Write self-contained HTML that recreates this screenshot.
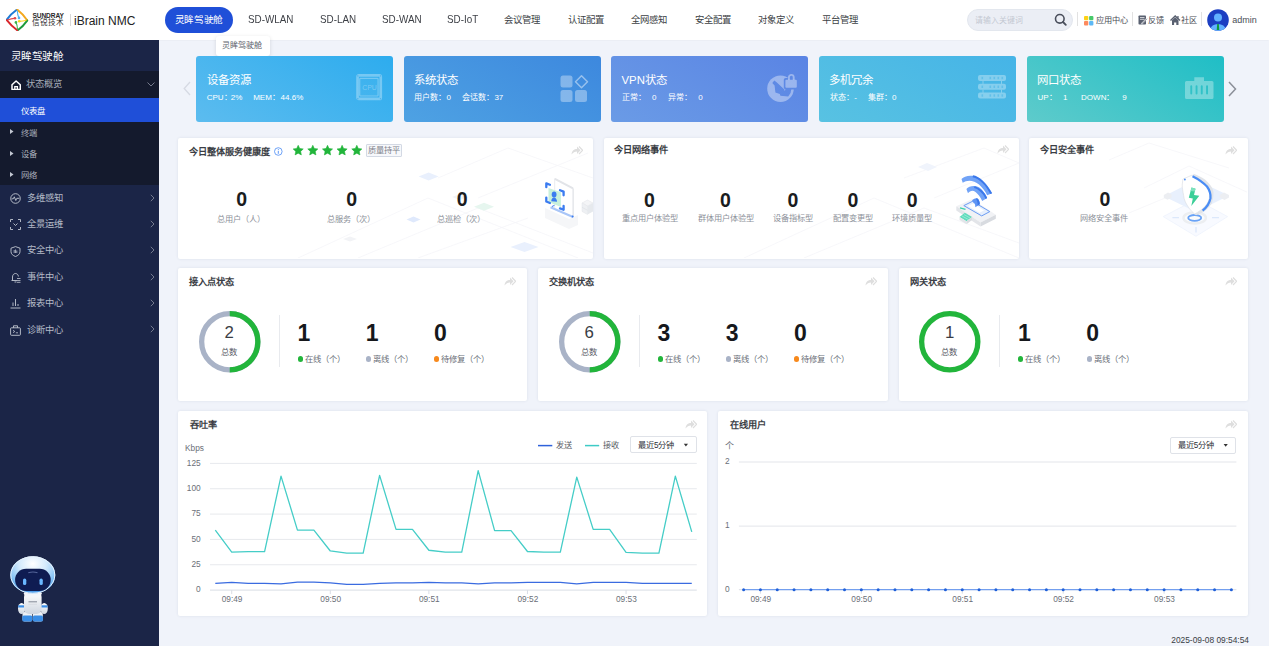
<!DOCTYPE html>
<html lang="zh-CN"><head><meta charset="utf-8">
<style>
*{margin:0;padding:0;box-sizing:border-box}
html,body{width:1269px;height:646px;overflow:hidden;background:#f0f3fa;font-family:"Liberation Sans",sans-serif;position:relative}
.a{position:absolute;white-space:nowrap;line-height:1}
#hdr{position:absolute;left:0;top:0;width:1269px;height:39.6px;background:#fff;box-shadow:0 0.6px 1px rgba(0,0,0,0.02)}
#side{position:absolute;left:0;top:40px;width:159px;height:606px;background:#1b2547}
.nav{font-size:10.6px;color:#3c3f45;top:14.4px;transform:scaleX(0.93);transform-origin:0 0}
.navc{font-size:9.4px;color:#3c3f45;top:14.6px}
.card{position:absolute;top:55.5px;height:66px;width:197.4px;border-radius:3px;color:#fff}
.card .t{position:absolute;left:10.5px;top:19px;font-size:11.4px;line-height:1;white-space:nowrap}
.card .s{position:absolute;left:10.5px;top:38px;font-size:8px;line-height:1;white-space:nowrap}
.pnl{position:absolute;background:#fff;border-radius:2px;box-shadow:0 0 3px rgba(40,60,110,0.10)}
.pt{position:absolute;left:11px;top:9.5px;font-size:9.2px;font-weight:bold;color:#3b3e45;white-space:nowrap;line-height:1}
.lbl{font-size:8.2px;color:#8c9099}
.big{font-size:19.5px;font-weight:bold;color:#1a1c20}
.fw{position:absolute;width:12px;height:9px}
.mi{font-size:9.3px;color:#b4bac6}
.sub{font-size:8.3px;color:#a9aebb}
.big2{font-size:23px;font-weight:bold;color:#16181c}
.tot{font-size:16.8px;color:#3a3d44}
.tl{font-size:8.3px;color:#55585f}
.lbl2{font-size:8.3px;color:#6b6f78}
.axl{font-size:8.3px;color:#6b6f78}
</style></head><body>
<!-- HEADER -->
<div id="hdr">
  <svg class="a" style="left:6px;top:9px" width="23" height="22" viewBox="0 0 23 22">
    <path d="M10.8 0.7 Q5 4.7 0.8 10.6" stroke="#1e7ad6" stroke-width="1.9" fill="none" stroke-linecap="round"/>
    <path d="M11.4 0.7 Q17.2 5.2 21.2 11.2" stroke="#f4a81d" stroke-width="1.9" fill="none" stroke-linecap="round"/>
    <path d="M21.2 11.6 Q17.2 17.3 11.8 21.2" stroke="#1d9a3c" stroke-width="1.9" fill="none" stroke-linecap="round"/>
    <path d="M11.2 21.2 Q5.2 16.9 0.8 11.2" stroke="#d9262c" stroke-width="1.9" fill="none" stroke-linecap="round"/>
    <path d="M11.3 1.5 Q11.5 6 12.7 8.4" stroke="#4fb2ef" stroke-width="1.1" fill="none"/><circle cx="13" cy="8.9" r="1.3" fill="#4fb2ef"/>
    <path d="M20.5 11.2 Q16.5 12 13.8 12.3" stroke="#f7d21c" stroke-width="1.1" fill="none"/><circle cx="13.2" cy="12.3" r="1.3" fill="#f7d21c"/>
    <path d="M11.5 20.5 Q11.3 16 10.2 13.8" stroke="#3cb24b" stroke-width="1.1" fill="none"/><circle cx="9.9" cy="13.4" r="1.3" fill="#3cb24b"/>
    <path d="M1.5 11 Q5.5 9.8 8.3 9.4" stroke="#e0474c" stroke-width="1.1" fill="none"/><circle cx="9" cy="9.3" r="1.3" fill="#e0474c"/>
  </svg>
  <div class="a" style="left:32.5px;top:12.5px;font-size:6.6px;font-weight:bold;color:#2a2a2a;letter-spacing:-0.1px">SUNDRAY</div>
  <div class="a" style="left:32.3px;top:18.6px;font-size:7.6px;color:#2c2c2c">信锐技术</div>
  <div class="a" style="left:69.5px;top:13.5px;width:1px;height:12.5px;background:#d8d8d8"></div>
  <div class="a" style="left:74px;top:14.5px;font-size:12px;color:#222">iBrain NMC</div>

  <div class="a" style="left:165px;top:6.5px;width:67.5px;height:26.5px;border-radius:13.25px;background:#1f4fd8"></div>
  <div class="a navc" style="left:174.8px;top:14.8px;font-size:9.6px;letter-spacing:-0.35px;color:#fff">灵眸驾驶舱</div>
  <div class="a nav" style="left:248px">SD-WLAN</div>
  <div class="a nav" style="left:319.5px">SD-LAN</div>
  <div class="a nav" style="left:381.5px">SD-WAN</div>
  <div class="a nav" style="left:447px">SD-IoT</div>
  <div class="a navc" style="left:504px">会议管理</div>
  <div class="a navc" style="left:568px">认证配置</div>
  <div class="a navc" style="left:631px">全网感知</div>
  <div class="a navc" style="left:694.5px">安全配置</div>
  <div class="a navc" style="left:758px">对象定义</div>
  <div class="a navc" style="left:821.5px">平台管理</div>

  <div class="a" style="left:967px;top:9px;width:106px;height:21.5px;border-radius:11px;background:#ebeef5;border:1px solid #e3e7ee"></div>
  <div class="a" style="left:975px;top:16.5px;font-size:7.9px;color:#c3c8d2">请输入关键词</div>
  <svg class="a" style="left:1054px;top:13px" width="13" height="13" viewBox="0 0 13 13"><circle cx="5.8" cy="5.8" r="4.3" stroke="#4a4f5c" stroke-width="1.6" fill="none"/><path d="M9 9 L11.8 11.8" stroke="#4a4f5c" stroke-width="1.8" stroke-linecap="round"/></svg>
  <div class="a" style="left:1076.5px;top:12px;width:1px;height:14px;background:#e2e2e2"></div>
  <svg class="a" style="left:1083.5px;top:15.5px" width="10" height="10" viewBox="0 0 10 10"><rect x="0" y="0" width="4.3" height="4.3" rx="1" fill="#fcd116"/><rect x="5.1" y="0" width="4.3" height="4.3" rx="1" fill="#47c96a"/><rect x="0" y="5.1" width="4.3" height="4.3" rx="1" fill="#fd8a5e"/><rect x="5.1" y="5.1" width="4.3" height="4.3" rx="1" fill="#5cb8f6"/></svg>
  <div class="a" style="left:1096px;top:16.8px;font-size:8.2px;color:#4a4d55">应用中心</div>
  <div class="a" style="left:1131.5px;top:12px;width:1px;height:14px;background:#e2e2e2"></div>
  <svg class="a" style="left:1137.5px;top:15px" width="10" height="10" viewBox="0 0 10 10"><rect x="0.5" y="0.5" width="7.5" height="9" rx="0.8" fill="#596070"/><path d="M2 2.5 H6.5 M2 4.3 H6.5" stroke="#fff" stroke-width="0.7"/><path d="M3.5 9 L9 3.5" stroke="#fff" stroke-width="1.6"/><path d="M3.8 8.8 L8.8 3.8" stroke="#596070" stroke-width="0.9"/></svg>
  <div class="a" style="left:1148px;top:16.8px;font-size:8.2px;color:#4a4d55">反馈</div>
  <svg class="a" style="left:1169.5px;top:14.5px" width="11" height="11" viewBox="0 0 11 11"><path d="M0.5 5.5 L5.2 1 L10 5.5" stroke="#596070" stroke-width="1.4" fill="none"/><path d="M2 5.2 L5.2 2.3 L8.5 5.2 V10 H6.3 V7.5 H4.1 V10 H2 Z" fill="#596070"/><rect x="7.3" y="1" width="1.3" height="2.5" fill="#596070"/></svg>
  <div class="a" style="left:1180.5px;top:16.8px;font-size:8.2px;color:#4a4d55">社区</div>
  <div class="a" style="left:1200.5px;top:12px;width:1px;height:14px;background:#e2e2e2"></div>
  <svg class="a" style="left:1207px;top:9px" width="22" height="22" viewBox="0 0 22 22"><defs><clipPath id="av"><circle cx="11" cy="11" r="10.8"/></clipPath></defs><circle cx="11" cy="11" r="10.8" fill="#1c3fc2"/><g clip-path="url(#av)"><circle cx="11" cy="8.5" r="4" fill="#62b1ff"/><ellipse cx="11" cy="20.5" rx="7.5" ry="5.5" fill="#62b1ff"/><path d="M10.2 15 H11.8 L12.3 21 H9.7 Z" fill="#0e9b3a"/></g></svg>
  <div class="a" style="left:1232.3px;top:16px;font-size:9px;color:#4a4d55">admin</div>
</div>

<!-- SIDEBAR -->
<div id="side">
  <div class="a" style="left:0;top:31px;width:159px;height:113.5px;background:#141a2d"></div>
  <div class="a" style="left:0;top:58px;width:159px;height:24px;background:#1f4fd8"></div>
  <div class="a" style="left:10.5px;top:10.8px;font-size:10.6px;letter-spacing:-0.5px;color:#fff">灵眸驾驶舱</div>
  <svg class="a" style="left:10.8px;top:39.6px" width="10.5" height="10.5" viewBox="0 0 10.5 10.5"><path d="M1 4.8 L5.1 1 L9.3 4.8 V9.4 H1 Z" stroke="#fff" stroke-width="1.5" fill="none" stroke-linejoin="round"/><path d="M3.8 9.4 V6.6 H6.4 V9.4" stroke="#fff" stroke-width="1.3" fill="none"/></svg>
  <div class="a mi" style="left:26px;top:40.3px;color:#a5abb8">状态概览</div>
  <svg class="a" style="left:147px;top:42px" width="8" height="5" viewBox="0 0 8 5"><path d="M0.5 0.5 L4 4 L7.5 0.5" stroke="#7f8596" stroke-width="0.9" fill="none"/></svg>
  <div class="a" style="left:21px;top:67px;font-size:8.4px;color:#fff">仪表盘</div>

  <svg class="a" style="left:10px;top:89px" width="4" height="5"><path d="M0 0 L3.5 2.5 L0 5 Z" fill="#c3c8d3"/></svg>
  <div class="a sub" style="left:20.8px;top:88.5px">终端</div>
  <svg class="a" style="left:10px;top:111px" width="4" height="5"><path d="M0 0 L3.5 2.5 L0 5 Z" fill="#c3c8d3"/></svg>
  <div class="a sub" style="left:20.8px;top:110px">设备</div>
  <svg class="a" style="left:10px;top:132px" width="4" height="5"><path d="M0 0 L3.5 2.5 L0 5 Z" fill="#c3c8d3"/></svg>
  <div class="a sub" style="left:20.8px;top:131px">网络</div>

  <!-- menus: centers y (abs) 198.3,224.5,251,277.6,303.8,330.4 -> side-relative minus 40 -->
  <svg class="a" style="left:10px;top:153px" width="11" height="11" viewBox="0 0 11 11"><circle cx="5.5" cy="5.5" r="4.8" stroke="#c3c8d3" stroke-width="0.9" fill="none"/><path d="M1.5 5.8 H3.3 L4.3 3.8 L5.8 7.5 L6.8 5.3 H9.5" stroke="#c3c8d3" stroke-width="0.9" fill="none"/></svg>
  <div class="a mi" style="left:26.5px;top:153.5px">多维感知</div>
  <svg class="a" style="left:149.5px;top:153.7px" width="5" height="8" viewBox="0 0 5 8"><path d="M0.8 0.8 L4 4 L0.8 7.2" stroke="#7f8596" stroke-width="0.9" fill="none"/></svg>

  <svg class="a" style="left:10px;top:179px" width="11" height="11" viewBox="0 0 11 11"><path d="M0.5 3 V0.5 H3 M8 0.5 H10.5 V3 M10.5 8 V10.5 H8 M3 10.5 H0.5 V8" stroke="#c3c8d3" stroke-width="0.9" fill="none"/><path d="M3.5 4.5 L5.5 6.5 L7.5 4.5" stroke="#c3c8d3" stroke-width="0.9" fill="none"/></svg>
  <div class="a mi" style="left:26.5px;top:179.7px">全景运维</div>
  <svg class="a" style="left:149.5px;top:179.7px" width="5" height="8" viewBox="0 0 5 8"><path d="M0.8 0.8 L4 4 L0.8 7.2" stroke="#7f8596" stroke-width="0.9" fill="none"/></svg>

  <svg class="a" style="left:10px;top:205.5px" width="11" height="11" viewBox="0 0 11 11"><path d="M5.5 0.6 L10 2.2 V5.6 C10 8 8 9.7 5.5 10.5 C3 9.7 1 8 1 5.6 V2.2 Z" stroke="#c3c8d3" stroke-width="0.9" fill="none"/><path d="M4.2 4 V7 M5.5 3.5 V7 M6.8 4.5 V7" stroke="#c3c8d3" stroke-width="0.8"/></svg>
  <div class="a mi" style="left:26.5px;top:206.2px">安全中心</div>
  <svg class="a" style="left:149.5px;top:206.2px" width="5" height="8" viewBox="0 0 5 8"><path d="M0.8 0.8 L4 4 L0.8 7.2" stroke="#7f8596" stroke-width="0.9" fill="none"/></svg>

  <svg class="a" style="left:10px;top:232px" width="11" height="11" viewBox="0 0 11 11"><path d="M1.5 8.5 H7 M2.5 8.5 V5 C2.5 3 3.8 1.5 5.5 1.5 C7 1.5 8.3 2.7 8.4 4.5" stroke="#c3c8d3" stroke-width="0.9" fill="none"/><path d="M7 6.5 H10.5 M7 8.5 H10.5 M7 10.3 H10.5" stroke="#c3c8d3" stroke-width="0.8"/><path d="M4.5 10 H6.5" stroke="#c3c8d3" stroke-width="0.9"/></svg>
  <div class="a mi" style="left:26.5px;top:232.8px">事件中心</div>
  <svg class="a" style="left:149.5px;top:232.7px" width="5" height="8" viewBox="0 0 5 8"><path d="M0.8 0.8 L4 4 L0.8 7.2" stroke="#7f8596" stroke-width="0.9" fill="none"/></svg>

  <svg class="a" style="left:10px;top:258px" width="11" height="11" viewBox="0 0 11 11"><path d="M0.5 10 H10.5" stroke="#c3c8d3" stroke-width="0.9"/><path d="M3 8 V4.5 M5.5 8 V1 M8 8 V6" stroke="#c3c8d3" stroke-width="0.9"/></svg>
  <div class="a mi" style="left:26.5px;top:259px">报表中心</div>
  <svg class="a" style="left:149.5px;top:258.7px" width="5" height="8" viewBox="0 0 5 8"><path d="M0.8 0.8 L4 4 L0.8 7.2" stroke="#7f8596" stroke-width="0.9" fill="none"/></svg>

  <svg class="a" style="left:10px;top:284.5px" width="11" height="11" viewBox="0 0 11 11"><rect x="0.6" y="2.8" width="9.8" height="7.5" rx="0.8" stroke="#c3c8d3" stroke-width="0.9" fill="none"/><path d="M3.5 2.8 V0.8 H7.5 V2.8" stroke="#c3c8d3" stroke-width="0.9" fill="none"/><path d="M3 5.3 L4.8 6.5 L3 7.7 M5.8 7.8 H8" stroke="#c3c8d3" stroke-width="0.8" fill="none"/></svg>
  <div class="a mi" style="left:26.5px;top:285.6px">诊断中心</div>
  <svg class="a" style="left:149.5px;top:285.2px" width="5" height="8" viewBox="0 0 5 8"><path d="M0.8 0.8 L4 4 L0.8 7.2" stroke="#7f8596" stroke-width="0.9" fill="none"/></svg>

  <!-- robot -->
  <svg class="a" style="left:0;top:505px" width="70" height="85" viewBox="0 0 70 85">
    <defs>
      <radialGradient id="hel" cx="0.5" cy="0.2" r="0.85"><stop offset="0" stop-color="#ffffff"/><stop offset="0.35" stop-color="#d4eafc"/><stop offset="0.68" stop-color="#86c3f5"/><stop offset="0.88" stop-color="#4c9cea"/><stop offset="1" stop-color="#d6eafc"/></radialGradient>
      <linearGradient id="bod" x1="0" y1="0" x2="0" y2="1"><stop offset="0" stop-color="#ffffff"/><stop offset="1" stop-color="#cfd6e0"/></linearGradient>
    </defs>
    <rect x="22.5" y="67" width="9.8" height="9.5" rx="2" fill="#eef1f5"/><rect x="33" y="67" width="9.8" height="9.5" rx="2" fill="#eef1f5"/>
    <rect x="22.3" y="70.5" width="10" height="6" rx="1.5" fill="#3a8ee6"/><rect x="32.9" y="70.5" width="10" height="6" rx="1.5" fill="#3a8ee6"/>
    <ellipse cx="21.6" cy="63.5" rx="3.6" ry="5.6" fill="url(#bod)"/><ellipse cx="44.2" cy="63.5" rx="3.6" ry="5.6" fill="url(#bod)"/>
    <rect x="18.2" y="60.3" width="6.5" height="2.2" fill="#3a8ee6"/><rect x="41" y="60.3" width="6.5" height="2.2" fill="#3a8ee6"/>
    <rect x="24" y="47" width="17.6" height="22" rx="5" fill="url(#bod)"/>
    <path d="M28.5 56.8 H37" stroke="#6b7280" stroke-width="0.8"/><path d="M28.5 59.3 H37" stroke="#d0d5dc" stroke-width="0.6"/>
    <ellipse cx="32.8" cy="48.5" rx="9" ry="3.6" fill="#f4f6fa"/>
    <ellipse cx="32.8" cy="30" rx="22.5" ry="18.8" fill="url(#hel)"/>
    <ellipse cx="32.8" cy="30" rx="22" ry="18.3" fill="none" stroke="#e8f3fd" stroke-width="1"/>
    <rect x="15.1" y="23.7" width="35.6" height="22.3" rx="11" fill="#0f1c52"/>
    <rect x="23" y="33.6" width="3.3" height="6.5" rx="1.6" fill="#69b7ff"/><rect x="39.5" y="33.6" width="3.3" height="6.5" rx="1.6" fill="#69b7ff"/>
    <path d="M28.3 27.8 Q33 26.2 37.5 27.8" stroke="#55659a" stroke-width="1.2" fill="none"/>
  </svg>
</div>

<!-- TOOLTIP -->
<div class="a" style="left:216.3px;top:35.5px;width:54px;height:20px;background:#fff;border-radius:3px;box-shadow:0 1px 4px rgba(0,0,0,0.12)"></div>
<div class="a" style="left:222.2px;top:42.3px;font-size:8.1px;color:#60646c">灵眸驾驶舱</div>

<!-- CARDS -->
<svg class="a" style="left:183px;top:81px" width="8" height="15" viewBox="0 0 8 15"><path d="M7 1 L1.2 7.5 L7 14" stroke="#d6dae3" stroke-width="1.3" fill="none"/></svg>
<svg class="a" style="left:1228px;top:80.5px" width="9" height="16" viewBox="0 0 9 16"><path d="M1 1 L7.5 8 L1 15" stroke="#8b8f98" stroke-width="1.5" fill="none"/></svg>

<div class="card" style="left:196px;background:linear-gradient(30deg,#5cbcef 0%,#2dacee 100%)">
  <div class="t">设备资源</div><div class="s" style="left:10.75px">CPU：</div><div class="s" style="left:34.7px">2%</div><div class="s" style="left:57.2px">MEM：</div><div class="s" style="left:84.6px">44.6%</div>
  <svg class="a" style="left:160px;top:18px" width="27" height="27" viewBox="0 0 27 27"><rect x="1.55" y="1.45" width="23.2" height="23.5" rx="1.2" stroke="rgba(255,255,255,0.32)" stroke-width="2.7" fill="none"/><g fill="rgba(40,150,220,0.5)"><circle cx="1.8" cy="1.9" r="0.7"/><circle cx="24.5" cy="1.9" r="0.7"/><circle cx="1.8" cy="24.7" r="0.7"/><circle cx="24.5" cy="24.7" r="0.7"/></g><rect x="3.7" y="4.4" width="18.4" height="17.6" rx="0.8" stroke="rgba(255,255,255,0.3)" stroke-width="1.2" fill="rgba(255,255,255,0.04)"/><text x="13.5" y="16.3" text-anchor="middle" font-family="Liberation Sans" font-size="6.9" fill="rgba(255,255,255,0.3)">CPU</text></svg>
</div>
<div class="card" style="left:403.5px;background:linear-gradient(30deg,#4ea2e3 0%,#3d88de 100%)">
  <div class="t">系统状态</div><div class="s" style="left:10.5px">用户数：</div><div class="s" style="left:43.1px">0</div><div class="s" style="left:58.7px">会话数：</div><div class="s" style="left:90.9px">37</div>
  <svg class="a" style="left:156px;top:18px" width="30" height="29" viewBox="0 0 30 29"><g fill="rgba(255,255,255,0.35)"><rect x="0.5" y="1.5" width="12" height="12" rx="2.5"/><rect x="0.5" y="16" width="12" height="12" rx="2.5"/><rect x="15" y="16" width="12" height="12" rx="2.5"/></g><path d="M21.5 1.8 L27.5 7.8 L21.5 13.8 L15.5 7.8 Z" stroke="rgba(255,255,255,0.45)" stroke-width="1.5" fill="none" stroke-linejoin="round"/></svg>
</div>
<div class="card" style="left:611px;background:linear-gradient(30deg,#6a9be6 0%,#5a84e4 100%)">
  <div class="t">VPN状态</div><div class="s" style="left:11.1px">正常：</div><div class="s" style="left:41.1px">0</div><div class="s" style="left:56.8px">异常：</div><div class="s" style="left:87.2px">0</div>
  <svg class="a" style="left:151px;top:14.5px" width="38" height="36" viewBox="0 0 38 36"><defs><mask id="vpnm"><rect width="38" height="36" fill="#fff"/><path d="M10.3 13 L12.3 10.6 L14.6 12.3 L22.4 19.6 L22.7 21.2 L23.9 18.6 L29.4 18.8 A10.9 10.9 0 0 1 26.2 26.4 L18.4 25.7 L17.8 24.1 L13.4 22.4 L12.6 15.6 Z" fill="#000"/><rect x="21.8" y="8" width="14.6" height="11.4" rx="1.8" fill="#000"/></mask></defs><g fill="rgba(255,255,255,0.38)"><circle cx="18.5" cy="18.7" r="13.3" mask="url(#vpnm)"/><rect x="23.4" y="9.7" width="11.4" height="8.1" rx="1"/><path d="M26.9 10 V7.3 A2.4 2.4 0 0 1 31.7 7.3 V10" stroke="rgba(255,255,255,0.38)" stroke-width="1.9" fill="none"/></g></svg>
</div>
<div class="card" style="left:818.5px;background:linear-gradient(30deg,#58c2e2 0%,#45b4e7 100%)">
  <div class="t">多机冗余</div><div class="s" style="left:11.25px">状态：</div><div class="s" style="left:35.7px">-</div><div class="s" style="left:49.4px">集群：</div><div class="s" style="left:73.5px">0</div>
  <svg class="a" style="left:159px;top:19.5px" width="29" height="25" viewBox="0 0 29 25"><g fill="rgba(255,255,255,0.33)"><rect x="0" y="0" width="28" height="6" rx="2"/><rect x="0" y="8.8" width="28" height="6" rx="2"/><rect x="0" y="17.5" width="28" height="6" rx="2"/><rect x="4.5" y="6" width="1" height="2.8"/><rect x="23" y="6" width="1" height="2.8"/><rect x="4.5" y="14.8" width="1" height="2.8"/><rect x="23" y="14.8" width="1" height="2.8"/></g><g fill="rgba(70,180,230,0.55)"><rect x="3.5" y="1.8" width="1.6" height="2.4"/><rect x="11.5" y="1.8" width="1.6" height="2.4"/><rect x="15.5" y="1.8" width="1.6" height="2.4"/><rect x="19.5" y="1.8" width="1.6" height="2.4"/><rect x="23.5" y="1.8" width="1.6" height="2.4"/><rect x="3.5" y="10.6" width="1.6" height="2.4"/><rect x="11.5" y="10.6" width="1.6" height="2.4"/><rect x="15.5" y="10.6" width="1.6" height="2.4"/><rect x="19.5" y="10.6" width="1.6" height="2.4"/><rect x="23.5" y="10.6" width="1.6" height="2.4"/><rect x="3.5" y="19.3" width="1.6" height="2.4"/><rect x="11.5" y="19.3" width="1.6" height="2.4"/><rect x="15.5" y="19.3" width="1.6" height="2.4"/><rect x="19.5" y="19.3" width="1.6" height="2.4"/><rect x="23.5" y="19.3" width="1.6" height="2.4"/></g></svg>
</div>
<div class="card" style="left:1026.8px;background:linear-gradient(30deg,#5ecbcb 0%,#1fbec6 100%)">
  <div class="t">网口状态</div><div class="s" style="left:10.8px">UP：</div><div class="s" style="left:36.3px">1</div><div class="s" style="left:54.3px">DOWN：</div><div class="s" style="left:95.4px">9</div>
  <svg class="a" style="left:158px;top:21px" width="29" height="23" viewBox="0 0 29 23"><path fill-rule="evenodd" fill="rgba(255,255,255,0.33)" d="M9.3 0.3 H19 V4 H27 a1.5 1.5 0 0 1 1.5 1.5 V20.6 a1.5 1.5 0 0 1 -1.5 1.5 H1.5 a1.5 1.5 0 0 1 -1.5 -1.5 V5.5 a1.5 1.5 0 0 1 1.5 -1.5 H9.3 Z M5.3 9.2 a0.95 0.95 0 0 1 1.9 0 V16.6 a0.95 0.95 0 0 1 -1.9 0 Z M10.6 9.2 a0.95 0.95 0 0 1 1.9 0 V16.6 a0.95 0.95 0 0 1 -1.9 0 Z M15.8 9.2 a0.95 0.95 0 0 1 1.9 0 V16.6 a0.95 0.95 0 0 1 -1.9 0 Z M21.1 9.2 a0.95 0.95 0 0 1 1.9 0 V16.6 a0.95 0.95 0 0 1 -1.9 0 Z "/></svg>
</div>

<!-- ROW 1 -->
<div class="pnl" style="left:178px;top:138px;width:415.4px;height:120.5px;overflow:hidden">
  <svg class="a" style="left:0;top:0" width="415" height="120" viewBox="0 0 415 120"><g stroke="#f3f4f8" stroke-width="0.7" fill="none"><path d="M120 120 L250 60 L400 120"/><path d="M180 120 L300 70 L415 115"/><path d="M240 120 L350 80"/><path d="M260 40 L330 10 L415 40"/><path d="M300 60 L410 15"/></g><g fill="#e9f0fd"><path d="M240.6 38.5 L250.6 34.5 L260.6 38.5 L250.6 42.5 Z"/><path d="M228.5 81.4 L235.5 78.4 L242.5 81.4 L235.5 84.4 Z" fill="#dfe9fc"/><path d="M332.5 109.0 L346.5 104.0 L360.5 109.0 L346.5 114.0 Z"/></g><path d="M296.0 68.8 L306.0 64.8 L316.0 68.8 L306.0 72.8 Z" fill="#e6f6ef"/><g fill="#f2f3f6"><path d="M274.0 59.0 L282.0 56.0 L290.0 59.0 L282.0 62.0 Z"/><path d="M165.0 101.0 L172.0 98.5 L179.0 101.0 L172.0 103.5 Z"/></g></svg>
  <div class="pt">今日整体服务健康度</div>
  <svg class="a" style="left:96.3px;top:8.8px" width="9" height="9" viewBox="0 0 9 9"><circle cx="4.3" cy="4.5" r="3.8" stroke="#4a8cf5" stroke-width="0.8" fill="none"/><path d="M4.3 3.8 V6.8" stroke="#4a8cf5" stroke-width="0.9"/><circle cx="4.3" cy="2.5" r="0.5" fill="#4a8cf5"/></svg>
  <svg class="a" style="left:115px;top:6.6px" width="72" height="12" viewBox="0 0 72 12"><g fill="#22b53b"><path id="st" stroke="#22b53b" stroke-width="0.6" stroke-linejoin="round" d="M5.20 0.30 L6.70 3.54 L10.24 3.96 L7.63 6.39 L8.32 9.89 L5.20 8.15 L2.08 9.89 L2.77 6.39 L0.16 3.96 L3.70 3.54 Z"/><use href="#st" x="14.6"/><use href="#st" x="29.3"/><use href="#st" x="43.9"/><use href="#st" x="58.6"/></g></svg>
  <div class="a" style="left:188.1px;top:6px;width:35.5px;height:13px;border:1px solid #d3d9e4;background:#f7f8fb;border-radius:1px"></div>
  <div class="a lbl" style="left:190px;top:8.5px;color:#7d818a">质量持平</div>
  <svg class="fw a" style="left:393.2px;top:7.6px" viewBox="0 0 12 9"><path d="M0.5 8.5 C1 4.5 3 3 6 3 V0.5 L9.5 4.3 L6 8 V5.5 C3.8 5.5 2 6.5 0.5 8.5 Z" fill="#dedede"/><path d="M8 0.5 L11.6 4.3 L8 8" stroke="#dedede" stroke-width="1.2" fill="none"/></svg>
  <div class="a big" style="left:58.3px;top:52.4px">0</div>
  <div class="a lbl" style="left:38.5px;top:77.5px">总用户（人）</div>
  <div class="a big" style="left:168.3px;top:52.4px">0</div>
  <div class="a lbl" style="left:148.5px;top:77.5px">总服务（次）</div>
  <div class="a big" style="left:278.8px;top:52.4px">0</div>
  <div class="a lbl" style="left:259px;top:77.5px">总巡检（次）</div>
  <!-- illustration -->
  <svg class="a" style="left:362px;top:37px" width="55" height="56" viewBox="0 0 55 56">
    <path d="M5 33 L29 44 L38 40 V50 L29 54 L5 43 Z" fill="#f5f6f8"/>
    <path d="M14.7 3.6 L33.2 13.5 V42 L14.7 34.5 Z" fill="#fff" stroke="#e4e6ea" stroke-width="0.8"/>
    <path d="M14.9 3.8 L33 13.3" stroke="#e2e4e8" stroke-width="2"/>
    <path d="M33.2 13.5 V42" stroke="#e6e8eb" stroke-width="1.4"/>
    <path d="M10.5 32.3 L33 42" stroke="#a9c6f8" stroke-width="2.2"/>
    <path d="M12 31.5 L14.5 30.3" stroke="#3b7cf0" stroke-width="1"/>
    <circle cx="32.6" cy="41.6" r="1" fill="#3b7cf0"/>
    <path d="M8.5 12.9 L20.9 17.2 V32 L8.5 27.1 Z" fill="#c8f0dc"/>
    <g stroke="#3b7cf0" stroke-width="2.3" fill="none" stroke-linecap="round" stroke-linejoin="round">
      <path d="M6.3 12.2 V8.4 L9.9 9.8"/><path d="M20 15.2 L23.6 16.6 V20.3"/><path d="M6.3 22.6 V26.5 L9.9 28"/><path d="M23.6 31 V34.8 L20 33.4"/>
    </g>
    <ellipse cx="14.1" cy="19.6" rx="2.4" ry="3" fill="#3b7cf0"/>
    <path d="M11.2 26.2 Q11.8 22.3 14.1 22.6 Q16.6 22.8 17.1 26.8 Z" fill="#3b7cf0"/>
    <path d="M42 28 L47.5 25 L53 28 L47.5 31 Z" fill="#f4f5f7" stroke="#e3e5e9" stroke-width="0.5"/>
    <path d="M42 28 L47.5 31 V39.5 L42 36.5 Z" fill="#eef0f3" stroke="#e3e5e9" stroke-width="0.5"/>
    <path d="M47.5 31 L53 28 V36.5 L47.5 39.5 Z" fill="#e6e9ed"/>
    <path d="M42 32.3 L47.5 35.3" stroke="#dcdfe4" stroke-width="0.6"/>
  </svg>
</div>
<div class="pnl" style="left:604px;top:138px;width:415.2px;height:120.5px;overflow:hidden">
  <svg class="a" style="left:0;top:0" width="415" height="120" viewBox="0 0 415 120"><g stroke="#f3f4f8" stroke-width="0.7" fill="none"><path d="M140 120 L270 60 L415 120"/><path d="M200 120 L320 70 L415 105"/><path d="M300 40 L380 10 L415 25"/><path d="M330 60 L415 25"/></g><path d="M314 29 L323 25 L333 29 L324 33 Z" fill="#f0f4fc"/></svg>
  <div class="pt" style="left:10.2px;top:8px">今日网络事件</div>
  <svg class="fw a" style="left:393.2px;top:7.1px" viewBox="0 0 12 9"><path d="M0.5 8.5 C1 4.5 3 3 6 3 V0.5 L9.5 4.3 L6 8 V5.5 C3.8 5.5 2 6.5 0.5 8.5 Z" fill="#dedede"/><path d="M8 0.5 L11.6 4.3 L8 8" stroke="#dedede" stroke-width="1.2" fill="none"/></svg>
  <div class="a big" style="left:40px;top:52.8px">0</div>
  <div class="a lbl" style="left:18px;top:77px">重点用户体验型</div>
  <div class="a big" style="left:116px;top:52.8px">0</div>
  <div class="a lbl" style="left:93.5px;top:77px">群体用户体验型</div>
  <div class="a big" style="left:183.5px;top:52.8px">0</div>
  <div class="a lbl" style="left:169px;top:77px">设备指标型</div>
  <div class="a big" style="left:243.5px;top:52.8px">0</div>
  <div class="a lbl" style="left:228.5px;top:77px">配置变更型</div>
  <div class="a big" style="left:302.8px;top:52.8px">0</div>
  <div class="a lbl" style="left:288px;top:77px">环境质量型</div>
  <svg class="a" style="left:336px;top:27px" width="70" height="70" viewBox="0 0 70 70">
    <path d="M16.3 41.2 L32.5 34.1 L55.8 49.8 L40.6 57.4 Z" fill="#f1f2f5"/>
    <path d="M16.3 41.2 V45.5 L40.6 61.5 V57.4 Z" fill="#e3e5e9"/>
    <path d="M40.6 57.4 V61.5 L55.8 53.8 V49.8 Z" fill="#d8dbe0"/>
    <path d="M23.8 40.6 L32.5 36.3 L49.8 46.6 L41.7 50.9 Z" fill="#e6effd" stroke="#6b9cf3" stroke-width="1"/>
    <path d="M28 41 L33 38.6 L44 45.5 L39.5 47.8 Z" fill="#ffffff"/>
    <path d="M20 42.8 L25.5 44.4" stroke="#3fd0a9" stroke-width="1.4"/>
    <path d="M19.5 52 L24.9 47.7 L32 52 L26.5 56.3 Z" fill="#5fdcbc"/>
    <path d="M19.5 52 V55 L26.5 59.3 V56.3 Z" fill="#e3e5e9"/><path d="M26.5 56.3 V59.3 L32 55 V52 Z" fill="#d8dbe0"/>
    <path d="M22 51 L28.5 54.6 M24 49.6 L30.4 53.2" stroke="#c9f5ea" stroke-width="0.5"/>
    <path d="M21.5 14.1 C25 10.5 35 8 44 17 C48 21 50.5 25 52.1 28.3 L47.2 30.2 C45 26 42 22 39 19.5 C34 15 27 14.5 22.7 17.8 Z" fill="#71a3f7"/>
    <path d="M33 10.2 C39 11 46.5 18 52.1 28.3 L50.3 29 C46 20.5 39.5 13.5 32.6 12.2 Z" fill="#3b78ea"/>
    <path d="M26.4 24 C29 21 35 19.5 40 23 C43 25.5 45.5 29 47.2 33 L42.2 36.1 C40.5 32 38 29 35.5 27 C33 25 30 25.5 28 28.3 Z" fill="#71a3f7"/>
    <path d="M34.5 21.2 C39 22.3 44.5 26.5 47.2 33 L45.6 34 C42.8 28 38.5 24.3 34 23.1 Z" fill="#3b78ea"/>
    <path d="M32 36 C33 34 35.5 32.8 37.5 33.5 C39 34.5 39.8 37 39.8 39.2 L35.4 42.3 L35 39 Z" fill="#5f95f4"/>
    <path d="M37.5 33.5 C39 34.5 39.8 37 39.8 39.2 L37.6 40.7 C37.8 38 37.2 35.5 35.8 33.6 Z" fill="#3b78ea"/>
  </svg>
</div>
<div class="pnl" style="left:1029.4px;top:138px;width:218.6px;height:120.5px;overflow:hidden">
  <svg class="a" style="left:0;top:0" width="218" height="120" viewBox="0 0 218 120"><g stroke="#f3f4f8" stroke-width="0.7" fill="none"><path d="M80 22 L120 5 L200 30"/><path d="M115 50 L160 28 L220 55"/><path d="M100 75 L160 50"/></g></svg>
  <div class="pt" style="left:10.8px;top:8px">今日安全事件</div>
  <svg class="fw a" style="left:196.0px;top:7.6px" viewBox="0 0 12 9"><path d="M0.5 8.5 C1 4.5 3 3 6 3 V0.5 L9.5 4.3 L6 8 V5.5 C3.8 5.5 2 6.5 0.5 8.5 Z" fill="#dedede"/><path d="M8 0.5 L11.6 4.3 L8 8" stroke="#dedede" stroke-width="1.2" fill="none"/></svg>
  <div class="a big" style="left:70px;top:52.3px">0</div>
  <div class="a lbl" style="left:51px;top:76.8px">网络安全事件</div>
  <svg class="a" style="left:120.6px;top:22px" width="90" height="85" viewBox="0 0 90 85">
    <path d="M13.2 56.6 L46 39.5 L77.6 56.6 L46 76.3 Z" fill="#f8faff" stroke="#eef3fd" stroke-width="0.8"/>
    <path d="M13.8 36.2 L46 20 L79 35.5 L46 52 Z" fill="#e8f0fd"/>
    <g stroke="#dce8fb" stroke-width="1.3"><path d="M22.4 57.6 H29"/><path d="M62 57.6 H69"/><path d="M46 67 V72.5"/></g>
    <path d="M13.8 35 L18 32.5 L21.7 34.5 L21.7 37.5 L17.5 39.8 L13.8 37.8 Z" fill="#eceef2"/>
    <path d="M69.7 35 L74 32.5 L79 35 V37.5 L74.5 40 L69.7 37.5 Z" fill="#eceef2"/>
    <ellipse cx="44.7" cy="57.9" rx="11.2" ry="5.6" fill="#fafbfc" stroke="#eceef1" stroke-width="2.4"/>
    <ellipse cx="44.7" cy="57.9" rx="6.5" ry="2.9" fill="none" stroke="#6aa3f6" stroke-width="1.8"/>
    <path d="M43.4 13.8 C48 15.5 52 17.5 55.3 19.7 C60 24 63 28 63.5 32 C63.5 38 62.5 41 61.8 43.4 C58.5 48 55.5 50.5 52.6 52.6 L46 55.3 L44 54 Z" fill="#e1e4e9"/>
    <path d="M32.9 19.1 L42.1 15.1 C47 17.5 52.5 21 56.6 25.7 C59 29 60 32 59.9 35.5 C59.5 40 57.5 43.5 55.3 46 C52 49.5 48.5 52 44.7 54 C42.5 52.5 41 50.5 39.5 48.7 C36 44 34 40 33.6 35.5 C32.8 31 32.2 28 32.2 25 Z" fill="#ffffff" stroke="#dcdfe5" stroke-width="0.7"/>
    <path d="M42.5 16.2 C47.5 18.7 53 22.3 57 26.5 C59.5 30 60.8 34 60.5 38.2 C59.5 43 56.5 47.5 52.6 50.7" stroke="#4a8df5" stroke-width="2.2" fill="none"/>
    <circle cx="34.9" cy="19.5" r="0.9" fill="#4a8df5"/>
    <path d="M41.5 27.5 L45.5 28.8 L44 35 L49.3 35.8 L41.3 46 L42.8 38.5 L38.8 37.8 Z" fill="#3ccf98"/>
    <path d="M41.5 27.5 L45.5 28.8 L44.8 31.5 L40.5 31 Z" fill="#7ee2bd"/>
  </svg>
</div>

<!-- ROW 2 -->
<!--ROW2START-->
<div class="pnl" style="left:178px;top:268px;width:349.3px;height:133.3px">
  <div class="pt">接入点状态</div>
  <svg class="fw a" style="left:326.0px;top:9.1px" viewBox="0 0 12 9"><path d="M0.5 8.5 C1 4.5 3 3 6 3 V0.5 L9.5 4.3 L6 8 V5.5 C3.8 5.5 2 6.5 0.5 8.5 Z" fill="#dedede"/><path d="M8 0.5 L11.6 4.3 L8 8" stroke="#dedede" stroke-width="1.2" fill="none"/></svg>
  <svg class="a" style="left:19.65px;top:42.05px" width="63.50" height="63.50"><circle cx="31.75" cy="31.75" r="28.1" stroke="#a9b3c7" stroke-width="5.3" fill="none"/><path d="M31.75 3.6499999999999986 A28.1 28.1 0 0 1 31.75 59.85" stroke="#22b53b" stroke-width="5.3" fill="none"/></svg>
  <div class="a tot" style="left:46.6px;top:56.5px">2</div>
  <div class="a tl" style="left:42.9px;top:80.1px">总数</div>
  <div class="a" style="left:100.9px;top:46.9px;width:1px;height:52.6px;background:#e8eaee"></div>
  <div class="a big2" style="left:119.5px;top:54px">1</div>
  <div class="a" style="left:119.7px;top:88.3px;width:5.3px;height:5.3px;border-radius:50%;background:#22b53b"></div>
  <div class="a lbl2" style="left:126.7px;top:86.5px">在线（个）</div>
  <div class="a big2" style="left:187.8px;top:54px">1</div>
  <div class="a" style="left:188.0px;top:88.3px;width:5.3px;height:5.3px;border-radius:50%;background:#a9b3c7"></div>
  <div class="a lbl2" style="left:195.0px;top:86.5px">离线（个）</div>
  <div class="a big2" style="left:256px;top:54px">0</div>
  <div class="a" style="left:256.2px;top:88.3px;width:5.3px;height:5.3px;border-radius:50%;background:#f7891c"></div>
  <div class="a lbl2" style="left:263.2px;top:86.5px">待修复（个）</div>
</div>
<div class="pnl" style="left:538px;top:268px;width:350.3px;height:133.3px">
  <div class="pt">交换机状态</div>
  <svg class="fw a" style="left:327.0px;top:9.1px" viewBox="0 0 12 9"><path d="M0.5 8.5 C1 4.5 3 3 6 3 V0.5 L9.5 4.3 L6 8 V5.5 C3.8 5.5 2 6.5 0.5 8.5 Z" fill="#dedede"/><path d="M8 0.5 L11.6 4.3 L8 8" stroke="#dedede" stroke-width="1.2" fill="none"/></svg>
  <svg class="a" style="left:19.65px;top:42.05px" width="63.50" height="63.50"><circle cx="31.75" cy="31.75" r="28.1" stroke="#a9b3c7" stroke-width="5.3" fill="none"/><path d="M31.75 3.6499999999999986 A28.1 28.1 0 0 1 31.75 59.85" stroke="#22b53b" stroke-width="5.3" fill="none"/></svg>
  <div class="a tot" style="left:46.6px;top:56.5px">6</div>
  <div class="a tl" style="left:42.9px;top:80.1px">总数</div>
  <div class="a" style="left:100.9px;top:46.9px;width:1px;height:52.6px;background:#e8eaee"></div>
  <div class="a big2" style="left:119.5px;top:54px">3</div>
  <div class="a" style="left:119.7px;top:88.3px;width:5.3px;height:5.3px;border-radius:50%;background:#22b53b"></div>
  <div class="a lbl2" style="left:126.7px;top:86.5px">在线（个）</div>
  <div class="a big2" style="left:187.8px;top:54px">3</div>
  <div class="a" style="left:188.0px;top:88.3px;width:5.3px;height:5.3px;border-radius:50%;background:#a9b3c7"></div>
  <div class="a lbl2" style="left:195.0px;top:86.5px">离线（个）</div>
  <div class="a big2" style="left:256px;top:54px">0</div>
  <div class="a" style="left:256.2px;top:88.3px;width:5.3px;height:5.3px;border-radius:50%;background:#f7891c"></div>
  <div class="a lbl2" style="left:263.2px;top:86.5px">待修复（个）</div>
</div>
<div class="pnl" style="left:898.5px;top:268px;width:349.5px;height:133.3px">
  <div class="pt">网关状态</div>
  <svg class="fw a" style="left:326.2px;top:9.1px" viewBox="0 0 12 9"><path d="M0.5 8.5 C1 4.5 3 3 6 3 V0.5 L9.5 4.3 L6 8 V5.5 C3.8 5.5 2 6.5 0.5 8.5 Z" fill="#dedede"/><path d="M8 0.5 L11.6 4.3 L8 8" stroke="#dedede" stroke-width="1.2" fill="none"/></svg>
  <svg class="a" style="left:19.65px;top:42.05px" width="63.50" height="63.50"><circle cx="31.75" cy="31.75" r="28.1" stroke="#22b53b" stroke-width="5.3" fill="none"/></svg>
  <div class="a tot" style="left:46.6px;top:56.5px">1</div>
  <div class="a tl" style="left:42.9px;top:80.1px">总数</div>
  <div class="a" style="left:100.9px;top:46.9px;width:1px;height:52.6px;background:#e8eaee"></div>
  <div class="a big2" style="left:119.5px;top:54px">1</div>
  <div class="a" style="left:119.7px;top:88.3px;width:5.3px;height:5.3px;border-radius:50%;background:#22b53b"></div>
  <div class="a lbl2" style="left:126.7px;top:86.5px">在线（个）</div>
  <div class="a big2" style="left:187.8px;top:54px">0</div>
  <div class="a" style="left:188.0px;top:88.3px;width:5.3px;height:5.3px;border-radius:50%;background:#a9b3c7"></div>
  <div class="a lbl2" style="left:195.0px;top:86.5px">离线（个）</div>
</div>
<!--ROW2END-->
<!--ROW3START-->
<div class="pnl" style="left:178px;top:410.5px;width:529.1px;height:205.5px"></div>
<div class="pnl" style="left:717.8px;top:410.5px;width:530.2px;height:205.5px"></div>
<div class="a pt" style="left:190px;top:421px">吞吐率</div>
<svg class="fw a" style="left:685.2px;top:420.1px" viewBox="0 0 12 9"><path d="M0.5 8.5 C1 4.5 3 3 6 3 V0.5 L9.5 4.3 L6 8 V5.5 C3.8 5.5 2 6.5 0.5 8.5 Z" fill="#dedede"/><path d="M8 0.5 L11.6 4.3 L8 8" stroke="#dedede" stroke-width="1.2" fill="none"/></svg>
<div class="a axl" style="left:185px;top:443.5px">Kbps</div>
<div class="a lbl" style="left:556px;top:441.5px;color:#595c64">发送</div>
<div class="a lbl" style="left:602.8px;top:441.5px;color:#595c64">接收</div>
<div class="a" style="left:630.4px;top:436.2px;width:66.2px;height:17.2px;border:1px solid #dfe2e8;border-radius:2px;background:#fff"></div>
<div class="a lbl" style="left:637.9px;top:441.5px;color:#2e3138">最近5分钟</div>
<div class="a axl" style="right:1068.4px;top:458.7px">125</div>
<div class="a axl" style="right:1068.4px;top:484.0px">100</div>
<div class="a axl" style="right:1068.4px;top:509.4px">75</div>
<div class="a axl" style="right:1068.4px;top:534.7px">50</div>
<div class="a axl" style="right:1068.4px;top:560.1px">25</div>
<div class="a axl" style="right:1068.4px;top:585.4px">0</div>
<div class="a axl" style="left:221.7px;top:595.3px">09:49</div>
<div class="a axl" style="left:320.3px;top:595.3px">09:50</div>
<div class="a axl" style="left:418.9px;top:595.3px">09:51</div>
<div class="a axl" style="left:517.5px;top:595.3px">09:52</div>
<div class="a axl" style="left:616.0px;top:595.3px">09:53</div>
<div class="a pt" style="left:730px;top:421px">在线用户</div>
<svg class="fw a" style="left:1225.2px;top:420.1px" viewBox="0 0 12 9"><path d="M0.5 8.5 C1 4.5 3 3 6 3 V0.5 L9.5 4.3 L6 8 V5.5 C3.8 5.5 2 6.5 0.5 8.5 Z" fill="#dedede"/><path d="M8 0.5 L11.6 4.3 L8 8" stroke="#dedede" stroke-width="1.2" fill="none"/></svg>
<div class="a axl" style="left:724.5px;top:442px;font-size:9px">个</div>
<div class="a" style="left:1170.3px;top:436.5px;width:66.2px;height:17.2px;border:1px solid #dfe2e8;border-radius:2px;background:#fff"></div>
<div class="a lbl" style="left:1177.8px;top:441.8px;color:#2e3138">最近5分钟</div>
<div class="a axl" style="left:725px;top:457.3px">2</div>
<div class="a axl" style="left:725px;top:521.4px">1</div>
<div class="a axl" style="left:725px;top:585.0px">0</div>
<div class="a axl" style="left:750.4px;top:594.8px">09:49</div>
<div class="a axl" style="left:851.3px;top:594.8px">09:50</div>
<div class="a axl" style="left:952.3px;top:594.8px">09:51</div>
<div class="a axl" style="left:1053.2px;top:594.8px">09:52</div>
<div class="a axl" style="left:1154.1px;top:594.8px">09:53</div>
<svg class="a" style="left:0;top:0" width="1269" height="646" viewBox="0 0 1269 646">
<path d="M538 445.6 H552.3" stroke="#2f62db" stroke-width="1.5"/>
<path d="M585 445.6 H599.2" stroke="#3ecbc6" stroke-width="1.5"/>
<path d="M683.8 443.8 H688 L685.9 446.4 Z" fill="#333"/>
<path d="M210 463.40 H696.8" stroke="#e7e9ed" stroke-width="1"/>
<path d="M210 488.74 H696.8" stroke="#e7e9ed" stroke-width="1"/>
<path d="M210 514.08 H696.8" stroke="#e7e9ed" stroke-width="1"/>
<path d="M210 539.42 H696.8" stroke="#e7e9ed" stroke-width="1"/>
<path d="M210 564.76 H696.8" stroke="#e7e9ed" stroke-width="1"/>
<path d="M210 590.10 H696.8" stroke="#d9dde5" stroke-width="1"/>
<path d="M231.73 590.10 V594.10" stroke="#d9dde5" stroke-width="1"/>
<path d="M330.31 590.10 V594.10" stroke="#d9dde5" stroke-width="1"/>
<path d="M428.89 590.10 V594.10" stroke="#d9dde5" stroke-width="1"/>
<path d="M527.47 590.10 V594.10" stroke="#d9dde5" stroke-width="1"/>
<path d="M626.05 590.10 V594.10" stroke="#d9dde5" stroke-width="1"/>
<polyline points="215.30,530.09 231.73,552.19 248.16,551.68 264.59,551.68 281.02,476.07 297.45,530.09 313.88,530.09 330.31,550.98 346.74,553.20 363.17,553.20 379.60,475.36 396.03,529.39 412.46,529.39 428.89,550.27 445.32,552.19 461.75,552.19 478.18,470.60 494.61,530.60 511.04,530.60 527.47,551.48 543.90,552.19 560.33,552.19 576.76,477.08 593.19,529.39 609.62,529.39 626.05,552.39 642.48,553.20 658.91,553.20 675.34,476.07 691.77,531.82" stroke="#45cdc7" stroke-width="1.3" fill="none" stroke-linejoin="round"/>
<polyline points="215.30,583.41 231.73,582.40 248.16,583.41 264.59,583.41 281.02,583.92 297.45,582.09 313.88,582.09 330.31,582.90 346.74,584.32 363.17,584.32 379.60,583.41 396.03,582.90 412.46,582.90 428.89,582.40 445.32,582.90 461.75,582.90 478.18,583.92 494.61,582.90 511.04,582.90 527.47,582.40 543.90,582.40 560.33,582.40 576.76,583.92 593.19,582.40 609.62,582.40 626.05,582.40 642.48,583.41 658.91,583.41 675.34,583.41 691.77,583.41" stroke="#3a6be0" stroke-width="1.35" fill="none"/>
<path d="M1223.6 444.1 H1227.8 L1225.7 446.7 Z" fill="#333"/>
<path d="M738.9 462.0 H1236.4" stroke="#e3e5ea" stroke-width="1"/>
<path d="M738.9 526.1 H1236.4" stroke="#e3e5ea" stroke-width="1"/>
<path d="M738.9 589.7 H1236.4" stroke="#d9dde5" stroke-width="1"/>
<path d="M760.42 589.7 V593.7" stroke="#d9dde5" stroke-width="1"/>
<path d="M861.34 589.7 V593.7" stroke="#d9dde5" stroke-width="1"/>
<path d="M962.26 589.7 V593.7" stroke="#d9dde5" stroke-width="1"/>
<path d="M1063.18 589.7 V593.7" stroke="#d9dde5" stroke-width="1"/>
<path d="M1164.10 589.7 V593.7" stroke="#d9dde5" stroke-width="1"/>
<path d="M743.6 589.7 H1231.38" stroke="#5b8ff0" stroke-width="1"/>
<circle cx="743.60" cy="589.7" r="1.5" fill="#1f5fd8"/>
<circle cx="760.42" cy="589.7" r="1.5" fill="#1f5fd8"/>
<circle cx="777.24" cy="589.7" r="1.5" fill="#1f5fd8"/>
<circle cx="794.06" cy="589.7" r="1.5" fill="#1f5fd8"/>
<circle cx="810.88" cy="589.7" r="1.5" fill="#1f5fd8"/>
<circle cx="827.70" cy="589.7" r="1.5" fill="#1f5fd8"/>
<circle cx="844.52" cy="589.7" r="1.5" fill="#1f5fd8"/>
<circle cx="861.34" cy="589.7" r="1.5" fill="#1f5fd8"/>
<circle cx="878.16" cy="589.7" r="1.5" fill="#1f5fd8"/>
<circle cx="894.98" cy="589.7" r="1.5" fill="#1f5fd8"/>
<circle cx="911.80" cy="589.7" r="1.5" fill="#1f5fd8"/>
<circle cx="928.62" cy="589.7" r="1.5" fill="#1f5fd8"/>
<circle cx="945.44" cy="589.7" r="1.5" fill="#1f5fd8"/>
<circle cx="962.26" cy="589.7" r="1.5" fill="#1f5fd8"/>
<circle cx="979.08" cy="589.7" r="1.5" fill="#1f5fd8"/>
<circle cx="995.90" cy="589.7" r="1.5" fill="#1f5fd8"/>
<circle cx="1012.72" cy="589.7" r="1.5" fill="#1f5fd8"/>
<circle cx="1029.54" cy="589.7" r="1.5" fill="#1f5fd8"/>
<circle cx="1046.36" cy="589.7" r="1.5" fill="#1f5fd8"/>
<circle cx="1063.18" cy="589.7" r="1.5" fill="#1f5fd8"/>
<circle cx="1080.00" cy="589.7" r="1.5" fill="#1f5fd8"/>
<circle cx="1096.82" cy="589.7" r="1.5" fill="#1f5fd8"/>
<circle cx="1113.64" cy="589.7" r="1.5" fill="#1f5fd8"/>
<circle cx="1130.46" cy="589.7" r="1.5" fill="#1f5fd8"/>
<circle cx="1147.28" cy="589.7" r="1.5" fill="#1f5fd8"/>
<circle cx="1164.10" cy="589.7" r="1.5" fill="#1f5fd8"/>
<circle cx="1180.92" cy="589.7" r="1.5" fill="#1f5fd8"/>
<circle cx="1197.74" cy="589.7" r="1.5" fill="#1f5fd8"/>
<circle cx="1214.56" cy="589.7" r="1.5" fill="#1f5fd8"/>
<circle cx="1231.38" cy="589.7" r="1.5" fill="#1f5fd8"/>
</svg>
<div class="a axl" style="right:20px;top:636px;font-size:8.4px;color:#3a3d44">2025-09-08 09:54:54</div>
<!--ROW3END-->

</body></html>
